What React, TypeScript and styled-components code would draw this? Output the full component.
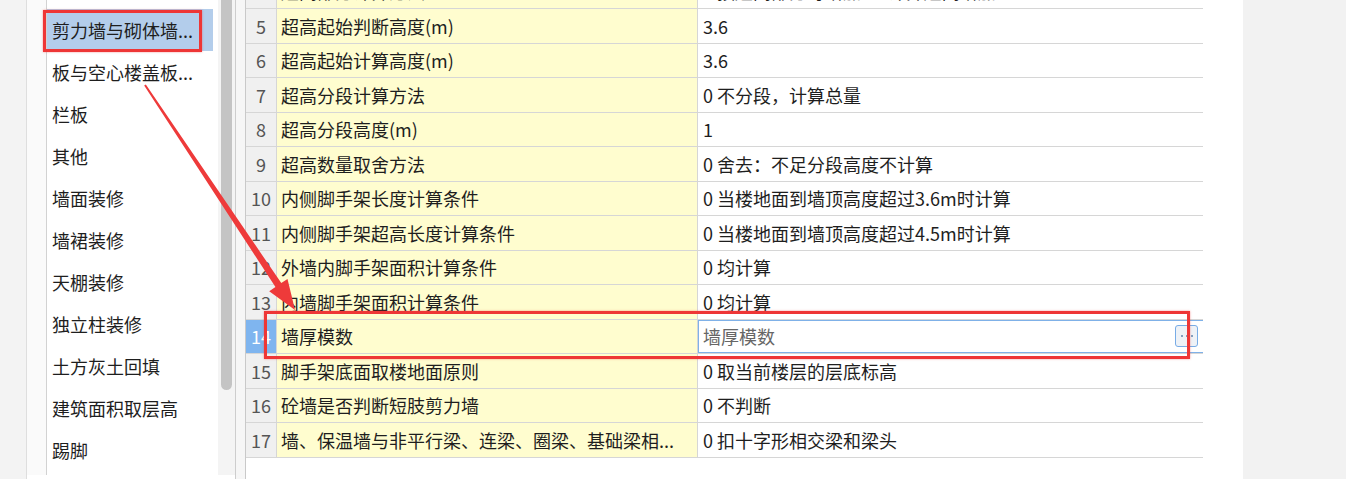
import React from "react";
import styled, { createGlobalStyle } from "styled-components";

const GlobalStyle = createGlobalStyle`
  html, body {
    margin: 0;
    padding: 0;
    background: #fff;
  }
  body {
    font-family: "Noto Sans CJK SC", "Liberation Sans", sans-serif;
    color: #1e1e1e;
  }
`;

const Page = styled.div`
  position: relative;
  display: flex;
  width: 1346px;
  height: 479px;
  overflow: hidden;
  background: #fff;
`;

const OuterStrip = styled.div`
  width: 26px;
  background: #f3f3f3;
  border-right: 1px solid #dedede;
`;

const SideStrip = styled.div`
  width: 19px;
  height: 475px;
  background: #fafafa;
  border-right: 1px solid #d2d2d2;
`;

const ListPanel = styled.div`
  display: flex;
  width: 188px;
  height: 475px;
  background: #fff;
`;

const List = styled.ul`
  flex: 1;
  margin: 0;
  padding: 9px 5px 0 0;
  list-style: none;
  overflow: hidden;
`;

const ListItem = styled.li<{ $active?: boolean }>`
  display: flex;
  align-items: center;
  height: 42px;
  padding-left: 5px;
  font-size: 18px;
  line-height: 1;
  white-space: nowrap;
  background: ${(p) => (p.$active ? "#b3cdeb" : "transparent")};
`;

const ScrollTrack = styled.div`
  width: 17px;
  padding-left: 3px;
  box-sizing: border-box;
  background: #f4f4f4;
`;

const ScrollThumb = styled.div`
  width: 11px;
  height: 390px;
  background: #c4c4c4;
  border-radius: 0 0 6px 6px;
`;

const Divider = styled.div`
  width: 9px;
  background: #f6f6f6;
  border-left: 1px solid #cdcdcd;
`;

const GridArea = styled.div`
  width: 998px;
  background: #fff;
`;

const Table = styled.div`
  width: 957px;
  height: 479px;
  border-left: 1px solid #c9c9c9;
  overflow: hidden;
`;

const TableBody = styled.div`
  margin-top: -25.5px;
`;

const Row = styled.div`
  display: grid;
  grid-template-columns: 31px 421px 505px;
  height: 34.5px;
  box-sizing: border-box;
  border-bottom: 1px solid #d6d6d6;
  font-size: 18px;
  line-height: 1;
`;

const NumCell = styled.div<{ $active?: boolean }>`
  display: flex;
  align-items: center;
  justify-content: center;
  background: ${(p) => (p.$active ? "#7fb5ef" : "#f0f0f0")};
  color: ${(p) => (p.$active ? "#fff" : "#555")};
  border-right: 1px solid #d6d6d6;
`;

const NameCell = styled.div`
  display: flex;
  align-items: center;
  padding-left: 4px;
  background: #fffdcf;
  border-right: 1px solid #d6d6d6;
  white-space: nowrap;
  overflow: hidden;
`;

const ValueCell = styled.div<{ $editing?: boolean }>`
  display: flex;
  align-items: center;
  justify-content: space-between;
  padding: 0 5px;
  white-space: nowrap;
  color: ${(p) => (p.$editing ? "#666" : "#1e1e1e")};
  box-shadow: ${(p) =>
    p.$editing
      ? "inset 0 1px 0 #7fb1e8, inset 0 -1px 0 #7fb1e8, inset 1px 0 0 #7fb1e8"
      : "none"};
`;

const EllipsisButton = styled.div`
  display: flex;
  align-items: center;
  justify-content: center;
  gap: 3px;
  width: 23px;
  height: 22px;
  box-sizing: border-box;
  border: 1px solid #78ace6;
  border-radius: 3px;
  background: #eef2f7;
`;

const Dot = styled.span`
  width: 2px;
  height: 2px;
  border-radius: 50%;
  background: #5f84ad;
`;

const RightGutter = styled.div`
  flex: 1;
  background: #f2f2f2;
`;

const Mark = styled.div<{ $x: number; $y: number; $w: number; $h: number }>`
  position: absolute;
  left: ${(p) => p.$x}px;
  top: ${(p) => p.$y}px;
  width: ${(p) => p.$w}px;
  height: ${(p) => p.$h}px;
  box-sizing: border-box;
  border: 3px solid #ee3636;
  box-shadow: 0 0 2px rgba(238, 54, 54, 0.5);
  pointer-events: none;
`;

const ArrowLayer = styled.svg`
  position: absolute;
  left: 0;
  top: 0;
  pointer-events: none;
`;

const categories = [
  "剪力墙与砌体墙...",
  "板与空心楼盖板...",
  "栏板",
  "其他",
  "墙面装修",
  "墙裙装修",
  "天棚装修",
  "独立柱装修",
  "土方灰土回填",
  "建筑面积取层高",
  "踢脚",
];

type Setting = { n: number; name: string; value: string; editing?: boolean };

const settings: Setting[] = [
  { n: 4, name: "超高部分计算方法", value: "1 按超高部分每增加1m计算超高增加" },
  { n: 5, name: "超高起始判断高度(m)", value: "3.6" },
  { n: 6, name: "超高起始计算高度(m)", value: "3.6" },
  { n: 7, name: "超高分段计算方法", value: "0 不分段，计算总量" },
  { n: 8, name: "超高分段高度(m)", value: "1" },
  { n: 9, name: "超高数量取舍方法", value: "0 舍去：不足分段高度不计算" },
  { n: 10, name: "内侧脚手架长度计算条件", value: "0 当楼地面到墙顶高度超过3.6m时计算" },
  { n: 11, name: "内侧脚手架超高长度计算条件", value: "0 当楼地面到墙顶高度超过4.5m时计算" },
  { n: 12, name: "外墙内脚手架面积计算条件", value: "0 均计算" },
  { n: 13, name: "内墙脚手架面积计算条件", value: "0 均计算" },
  { n: 14, name: "墙厚模数", value: "墙厚模数", editing: true },
  { n: 15, name: "脚手架底面取楼地面原则", value: "0 取当前楼层的层底标高" },
  { n: 16, name: "砼墙是否判断短肢剪力墙", value: "0 不判断" },
  { n: 17, name: "墙、保温墙与非平行梁、连梁、圈梁、基础梁相...", value: "0 扣十字形相交梁和梁头" },
];

export default function App() {
  return (
    <>
      <GlobalStyle />
      <Page>
        <OuterStrip />
        <SideStrip />
        <ListPanel>
          <List>
            {categories.map((c, i) => (
              <ListItem key={c} $active={i === 0}>
                {c}
              </ListItem>
            ))}
          </List>
          <ScrollTrack>
            <ScrollThumb />
          </ScrollTrack>
        </ListPanel>
        <Divider />
        <GridArea>
          <Table>
            <TableBody>
              {settings.map((s) => (
                <Row key={s.n}>
                  <NumCell $active={s.editing}>{s.n}</NumCell>
                  <NameCell>{s.name}</NameCell>
                  <ValueCell $editing={s.editing}>
                    <span>{s.value}</span>
                    {s.editing && (
                      <EllipsisButton>
                        <Dot />
                        <Dot />
                        <Dot />
                      </EllipsisButton>
                    )}
                  </ValueCell>
                </Row>
              ))}
            </TableBody>
          </Table>
        </GridArea>
        <RightGutter />

        <Mark $x={43} $y={10} $w={159} $h={42} />
        <Mark $x={264} $y={311} $w={926} $h={48} />
        <ArrowLayer width={1346} height={479} viewBox="0 0 1346 479">
          <polygon
            fill="#ee3a3a"
            points="145.83,84.45 281.27,283.1 287.51,278.94 295,310 269.21,291.14 275.45,286.98 144.17,85.55"
          />
        </ArrowLayer>
      </Page>
    </>
  );
}
